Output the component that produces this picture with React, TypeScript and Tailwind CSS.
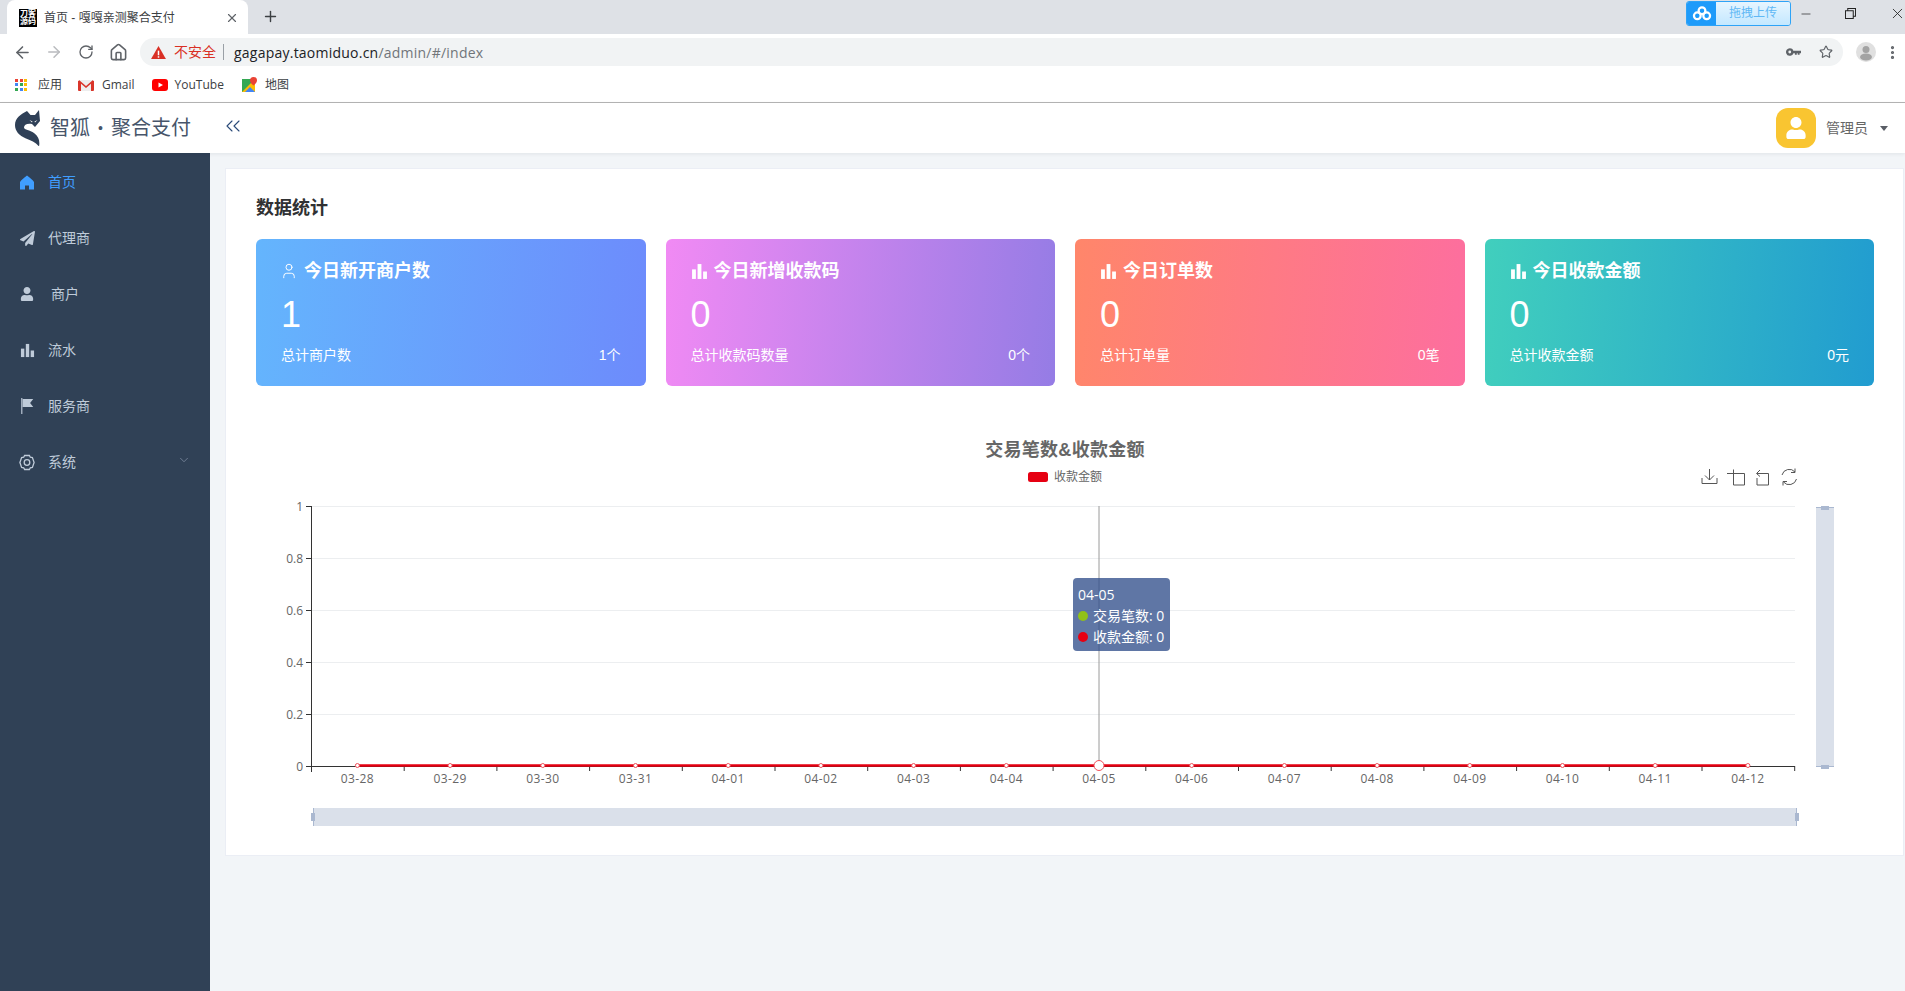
import { ArrowLeft, ArrowRight, ChevronDown, ChevronsLeft, EllipsisVertical, Home, Minus, Plus, RotateCw, Star, User, X } from 'lucide-react'
import { FaPaperPlane, FaUser } from 'react-icons/fa'

const dates = ['03-28', '03-29', '03-30', '03-31', '04-01', '04-02', '04-03', '04-04', '04-05', '04-06', '04-07', '04-08', '04-09', '04-10', '04-11', '04-12']
const yLabels = ['1', '0.8', '0.6', '0.4', '0.2', '0']

function Bars({ className }: { className?: string }) {
  return (
    <svg viewBox="0 0 16 16" className={className} fill="currentColor">
      <rect x="1" y="6" width="3.600" height="9" />
      <rect x="6.200" y="1" width="3.600" height="14" />
      <rect x="11.400" y="8" width="3.600" height="7" />
    </svg>
  )
}

function Gear({ className }: { className?: string }) {
  return (
    <svg viewBox="0 0 16 16" className={className} fill="none" stroke="currentColor" strokeWidth="1.300">
      <path d="M5.600 1h4.800l.9 1.700 2.100.4 1.700 4.900-1.700 4.900-2.100.4-.9 1.700H5.600l-.9-1.700-2.100-.4L.9 8l1.700-4.900 2.100-.4z" />
      <circle cx="8" cy="8" r="2.800" />
    </svg>
  )
}

function HomeFill({ className }: { className?: string }) {
  return (
    <svg viewBox="0 0 16 16" className={className} fill="currentColor">
      <path d="M8 1C5 3.500 2 5.500 1 7.500V15h5v-4h4v4h5V7.500C14 5.500 11 3.500 8 1z" />
    </svg>
  )
}

function Flag({ className }: { className?: string }) {
  return (
    <svg viewBox="0 0 16 18" className={className} fill="currentColor">
      <path d="M1.500 0h1.300v18H1.500z" />
      <path d="M3 1h12l-3.500 4.500L15 10H3z" />
    </svg>
  )
}

function Fox() {
  return (
    <svg viewBox="0 0 25 36" className="h-[36px] w-[25px]" fill="#2f4057">
      <path d="M12 1l3.500 4h4.500l4-5 1 11-5 6-3-3c-5-1-8 1-8 3.500s6 2.500 10 5.500c5 3.500 6 8.500 5 13.500-3-4-8-6-13-8C4 25.500 0 21 0 15 0 8 6 4 12 1z" />
      <path d="M14.500 10l3 1.500-.5 1z" fill="#fff" />
      <path d="M22.500 10l-3 1.500.5 1z" fill="#fff" />
    </svg>
  )
}

function Apps() {
  const c = ['#ea4335', '#ea4335', '#fbbc04', '#4285f4', '#34a853', '#fbbc04', '#34a853', '#4285f4', '#fbbc04']
  return (
    <div className="grid w-[12px] grid-cols-3 gap-[1.500px]">
      {c.map((v, i) => (
        <svg key={i} viewBox="0 0 3 3" className="size-[3px]"><rect width="3" height="3" fill={v} /></svg>
      ))}
    </div>
  )
}

function Gmail() {
  return (
    <svg viewBox="0 0 16 12" className="h-3 w-4">
      <path d="M1 1h14v11H1z" fill="#eee" />
      <path d="M1 1l7 6 7-6v2L8 9 1 3z" fill="#d9352a" />
      <path d="M0 1.500l3 2V12H1a1 1 0 0 1-1-1zM16 1.500l-3 2V12h2a1 1 0 0 0 1-1z" fill="#d9352a" />
    </svg>
  )
}

function YouTube() {
  return (
    <svg viewBox="0 0 16 12" className="h-3 w-4">
      <rect width="16" height="12" rx="3" fill="#f00" />
      <path d="M6.500 3.500l4.500 2.500-4.500 2.500z" fill="#fff" />
    </svg>
  )
}

function Maps() {
  return (
    <svg viewBox="0 0 16 16" className="size-4">
      <rect y="2" width="13" height="13" fill="#34a853" />
      <path d="M0 15L13 2v13z" fill="#fbbc04" />
      <path d="M3 15l5-5 5 5z" fill="#4285f4" />
      <path d="M11.500 0a3.500 3.500 0 0 1 3.500 3.500c0 2.500-3.500 5-3.500 5S8 6 8 3.500A3.500 3.500 0 0 1 11.500 0z" fill="#ea4335" />
    </svg>
  )
}

function Chart() {
  return (
    <svg viewBox="256 420 1618 420" className="block h-[420px] w-[1618px]">
      <text x="1065" y="456" textAnchor="middle" fontSize="18" fontWeight="700" letterSpacing="0.300" fill="#666">交易笔数&amp;收款金额</text>
      <rect x="1028" y="472" width="20" height="10" rx="2.500" fill="#e60012" />
      <text x="1054" y="481" fontSize="12" fill="#666">收款金额</text>

      <g fill="none" stroke="#555" strokeWidth="1" transform="translate(0 1)">
        <path d="M1702 477v5.500h15V477M1709.500 468v11M1705 474.500l4.500 4.500 4.500-4.500" />
        <path d="M1729 472.500h15.500V484h-11v-15.500M1727 472.500h6" />
        <path d="M1756.500 472.500l3.500-3.500M1756.500 472.500l3.500 3M1757 472.500h11.500V484h-11.500v-7" />
        <path d="M1782 474a7.500 7.500 0 0 1 13-3M1796.500 478a7.500 7.500 0 0 1-13 3M1795 467.500v4h-4M1783 484.500v-4h4" />
      </g>

      {[506, 558, 610, 662, 714].map((y) => (
        <line key={y} x1="311" x2="1795" y1={y + 0.5} y2={y + 0.5} stroke="#eceef0" />
      ))}
      <line x1="1099" x2="1099" y1="506" y2="766" stroke="#9a9a9a" />

      <g stroke="#333" strokeWidth="1">
        <line x1="311.500" x2="311.500" y1="506" y2="772" />
        <line x1="311" x2="1795" y1="766.500" y2="766.500" />
        {yLabels.map((_, i) => (
          <line key={i} x1="306" x2="311" y1={506.500 + i * 52} y2={506.500 + i * 52} />
        ))}
        {Array.from({ length: 17 }, (_, i) => (
          <line key={i} x1={311.500 + i * 92.700} x2={311.500 + i * 92.700} y1="766" y2="771" />
        ))}
      </g>

      <g fontFamily="'Open Sans', sans-serif" fontSize="12" fill="#666">
        {yLabels.map((label, i) => (
          <text key={label} x="303" y={510.500 + i * 52} textAnchor="end">{label}</text>
        ))}
        {dates.map((date, i) => (
          <text key={date} x={357.400 + i * 92.700} y="783" textAnchor="middle" letterSpacing="0.400">{date}</text>
        ))}
      </g>

      <line x1="357.400" x2="1747.900" y1="765.500" y2="765.500" stroke="#e60012" strokeWidth="2.500" />
      {dates.map((date, i) => (
        <circle key={date} cx={357.400 + i * 92.700} cy="765.500" r={i === 8 ? 5 : 2} fill="#fff" stroke="#f0505a" strokeWidth="1" />
      ))}

      <rect x="1816" y="508" width="18" height="258" fill="#dae0ea" />
      <line x1="1816" x2="1834" y1="507.500" y2="507.500" stroke="#aab8d0" />
      <line x1="1816" x2="1834" y1="766.500" y2="766.500" stroke="#aab8d0" />
      <rect x="1821" y="506" width="8" height="4" fill="#aab8d0" />
      <rect x="1821" y="765" width="8" height="4" fill="#aab8d0" />

      <rect x="313" y="808" width="1483" height="18" fill="#dae0ea" />
      <line x1="313.500" x2="313.500" y1="808" y2="826" stroke="#aab8d0" />
      <line x1="1796.500" x2="1796.500" y1="808" y2="826" stroke="#aab8d0" />
      <rect x="311" y="813" width="4" height="8" fill="#aab8d0" />
      <rect x="1795" y="813" width="4" height="8" fill="#aab8d0" />
    </svg>
  )
}

function StatCard({ title, value, label, total, gradient, userIcon }: { title: string; value: string; label: string; total: string; gradient: string; userIcon?: boolean }) {
  return (
    <div className={`flex h-[147px] flex-col rounded-md px-[25px] pt-[21px] text-white ${gradient}`}>
      <div className="flex h-[22px] items-center text-[18px] font-bold">
        <span className="flex w-[23px] items-center">
          {userIcon ? <User className="size-[18px] -translate-x-px" strokeWidth={1.300} /> : <Bars className="size-[17px]" />}
        </span>
        <span>{title}</span>
      </div>
      <div className="mt-[12px] text-[36px] leading-[42px]">{value}</div>
      <div className="mt-[9px] flex justify-between text-[14px] leading-[20px]">
        <span>{label}</span>
        <span>{total}</span>
      </div>
    </div>
  )
}

function NavItem({ icon, label, active, offset, chevron }: { icon: React.ReactNode; label: string; active?: boolean; offset?: boolean; chevron?: boolean }) {
  return (
    <div className={`flex h-[56px] items-center pl-[19px] text-[14px] ${active ? 'text-[#409eff]' : 'text-[#bfcbd9]'}`}>
      <span className="flex w-[16px] justify-center">{icon}</span>
      <span className={offset ? 'ml-[16px]' : 'ml-[13px]'}>{label}</span>
      {chevron && <ChevronDown className="ml-auto mr-[19px] mb-[4px] size-[14px] text-[#77859a]" strokeWidth={1.500} />}
    </div>
  )
}

export default function App() {
  return (
    <div className="flex h-[991px] w-[1905px] flex-col overflow-hidden bg-white font-['Liberation_Sans','Noto_Sans_CJK_SC',sans-serif]">
      {/* browser tab strip */}
      <div className="flex h-[34px] shrink-0 items-end bg-[#dee1e6] pl-[7px]">
        <div className="flex h-[34px] w-[241px] items-center rounded-t-lg bg-white pl-[12px] pr-[9px] pt-px text-[12px] text-[#3c4043]">
          <div className="flex size-[18px] flex-col items-center justify-center bg-black text-[8px] font-bold leading-[8px] text-white">
            <span>刀客</span>
            <span>源码</span>
          </div>
          <span className="ml-[7px]">首页 - 嘎嘎亲测聚合支付</span>
          <X className="ml-auto size-[14px] text-[#5f6368]" />
        </div>
        <Plus className="mb-[9px] ml-[14px] size-[17px] text-[#3c4043]" />
        <div className="mb-[8px] ml-auto flex h-[25px] w-[105px] overflow-hidden rounded-[3px] border border-[#2ea3f7]">
          <div className="flex w-[29px] items-center justify-center bg-[#1e9bfa]">
            <svg viewBox="0 0 20 16" className="h-[15px] w-[20px]" fill="none" stroke="#fff" strokeWidth="2.400">
              <circle cx="10" cy="5" r="3.600" />
              <circle cx="5" cy="10.500" r="3.600" />
              <circle cx="15" cy="10.500" r="3.600" />
            </svg>
          </div>
          <div className="flex-1 bg-linear-to-b from-[#e6f5ff] to-[#c4e8ff] text-center text-[12px] leading-[23px] text-[#5fb8f5]">拖拽上传</div>
        </div>
        <div className="mb-[8px] flex h-[25px] items-center text-[#222]">
          <Minus className="ml-[8px] size-[14px]" strokeWidth={1.200} />
          <svg viewBox="0 0 12 12" className="ml-[32px] size-[11px]" fill="none" stroke="#222" strokeWidth="1.100">
            <path d="M.500 3h8.500v8.500H.500zM3 3V.500h8.500V9H9" />
          </svg>
          <X className="ml-[33px] mr-[-1px] size-[17px]" strokeWidth={1.200} />
        </div>
      </div>

      {/* address bar */}
      <div className="flex h-[36px] shrink-0 items-center pl-[13px] pr-[2px]">
        <ArrowLeft className="size-[19px] text-[#5f6368]" />
        <ArrowRight className="ml-[13px] size-[18px] text-[#b9bbbe]" />
        <RotateCw className="ml-[15px] size-[16px] text-[#5f6368]" />
        <Home className="ml-[15px] size-[19px] text-[#5f6368]" />
        <div className="ml-[12px] flex h-[28px] w-[1703px] items-center rounded-full bg-[#f1f3f4] pl-[11px] pr-[10px] text-[14px]">
          <svg viewBox="0 0 16 14" className="h-[13px] w-[15px]" fill="#d93025">
            <path d="M8 0l8 14H0z" />
            <rect x="7.200" y="5" width="1.600" height="5" fill="#fff" />
            <rect x="7.200" y="11" width="1.600" height="1.600" fill="#fff" />
          </svg>
          <span className="ml-[8px] text-[#d93025]">不安全</span>
          <span className="ml-[7px] h-[16px] w-px bg-[#9aa0a6]" />
          <span className="ml-[10px] font-['Open_Sans'] text-[14px] tracking-[0.230px] text-[#202124]">
            gagapay.taomiduo.cn<span className="text-[#70757a]">/admin/#/index</span>
          </span>
          <svg viewBox="0 0 16 8" className="ml-auto h-[8px] w-[15px]" fill="#5f6368">
            <path d="M4 0a4 4 0 1 1-3.800 5.200A4 4 0 0 1 4 0zm0 2.500a1.500 1.500 0 1 0 0 3 1.500 1.500 0 0 0 0-3zM7.500 2.700H16v2.600h-1.500V7h-2V5.300h-1V7h-2V5.300H7.500z" />
          </svg>
          <Star className="ml-[18px] size-[14px] text-[#5f6368]" strokeWidth={2} />
        </div>
        <div className="ml-[13px] flex size-[20px] items-center justify-center overflow-hidden rounded-full bg-[#e0e0e0]">
          <svg viewBox="0 0 20 20" className="size-[20px]" fill="#a3a3a3">
            <circle cx="10" cy="7.500" r="3.500" />
            <ellipse cx="10" cy="15" rx="6" ry="3.500" />
          </svg>
        </div>
        <EllipsisVertical className="ml-[8px] size-[17px] text-[#5f6368]" strokeWidth={2.500} />
      </div>

      {/* bookmarks */}
      <div className="flex h-[33px] shrink-0 items-center border-b border-[#b5b5b5] pb-[3px] pl-[15px] text-[12px] text-[#3c4043]">
        <Apps />
        <span className="ml-[11px]">应用</span>
        <span className="ml-[16px]"><Gmail /></span>
        <span className="ml-[8px] font-['Open_Sans']">Gmail</span>
        <span className="ml-[17px]"><YouTube /></span>
        <span className="ml-[7px] font-['Open_Sans']">YouTube</span>
        <span className="ml-[18px]"><Maps /></span>
        <span className="ml-[7px]">地图</span>
      </div>

      {/* app header */}
      <div className="z-10 flex h-[50px] shrink-0 items-center bg-white pl-[15px] pr-[17px] shadow-[0_1px_4px_rgba(0,21,41,0.08)]">
        <Fox />
        <span className="ml-[10px] text-[20px] leading-none text-[#47556a]">智狐</span>
        <span className="ml-[8px] text-[14px] leading-none text-[#47556a]">•</span>
        <span className="ml-[8px] text-[20px] leading-none text-[#47556a]">聚合支付</span>
        <ChevronsLeft className="mb-[5px] ml-[30px] size-[24px] text-[#2a4a78]" strokeWidth={1.100} />
        <div className="ml-auto flex size-[40px] items-center justify-center rounded-[12px] bg-[#f9c531]">
          <FaUser className="size-[22px] text-white" />
        </div>
        <span className="ml-[10px] text-[14px] text-[#666]">管理员</span>
        <span className="ml-[12px] size-0 border-x-[4px] border-t-[5px] border-x-transparent border-t-[#5a5e66]" />
      </div>

      <div className="flex min-h-0 flex-1">
        {/* sidebar */}
        <div className="w-[210px] shrink-0 bg-[#304156] pt-px">
          <NavItem active label="首页" icon={<HomeFill className="size-[17px]" />} />
          <NavItem label="代理商" icon={<FaPaperPlane className="size-[15px]" />} />
          <NavItem offset label="商户" icon={<FaUser className="size-[14px]" />} />
          <NavItem label="流水" icon={<Bars className="size-[15px]" />} />
          <NavItem label="服务商" icon={<Flag className="size-[16px]" />} />
          <NavItem chevron label="系统" icon={<Gear className="size-[17px]" />} />
        </div>

        {/* content */}
        <div className="flex-1 bg-[#f2f5f8] pl-[15px] pr-px pt-[15px]">
          <div className="h-[688px] border border-[#ebeef5] bg-white pl-[30px] pr-[29px]">
            <h2 className="pt-[27px] text-[18px] font-bold leading-[24px] text-[#303133]">数据统计</h2>
            <div className="mt-[19px] grid grid-cols-4 gap-[20px]">
              <StatCard userIcon title="今日新开商户数" value="1" label="总计商户数" total="1个" gradient="bg-[linear-gradient(95deg,#64b5fd,#6d8bfc)]" />
              <StatCard title="今日新增收款码" value="0" label="总计收款码数量" total="0个" gradient="bg-[linear-gradient(95deg,#f18af4,#957ce5)]" />
              <StatCard title="今日订单数" value="0" label="总计订单量" total="0笔" gradient="bg-[linear-gradient(95deg,#ff866a,#fd6e9f)]" />
              <StatCard title="今日收款金额" value="0" label="总计收款金额" total="0元" gradient="bg-[linear-gradient(95deg,#41cfbd,#219cd0)]" />
            </div>
            <div className="relative mt-[34px]">
              <Chart />
              {/* hover tooltip */}
              <div className="absolute left-[817px] top-[158px] h-[73px] w-[97px] rounded bg-[rgba(50,80,140,0.78)] pl-[5px] pt-[6px] font-['Open_Sans','Noto_Sans_CJK_SC',sans-serif] text-[14px] leading-[21px] text-white">
                <div>04-05</div>
                <div className="flex items-center gap-[5px]">
                  <span className="size-[10px] rounded-full bg-[#91c117]" />
                  <span>交易笔数: 0</span>
                </div>
                <div className="flex items-center gap-[5px]">
                  <span className="size-[10px] rounded-full bg-[#e60012]" />
                  <span>收款金额: 0</span>
                </div>
              </div>
            </div>
          </div>
        </div>
      </div>
    </div>
  )
}
